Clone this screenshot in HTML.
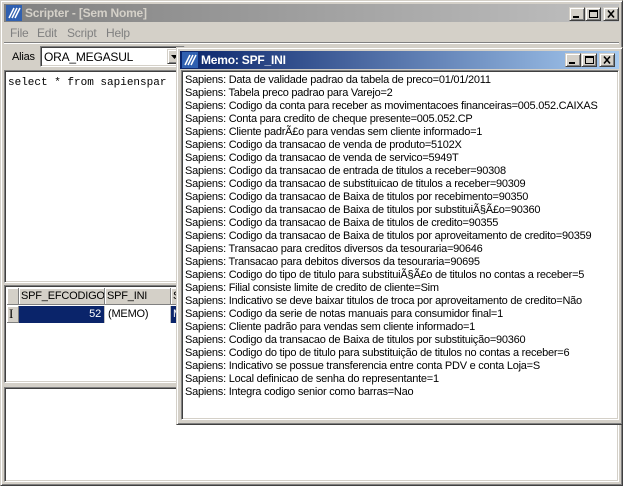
<!DOCTYPE html>
<html><head><meta charset="utf-8"><style>
*{margin:0;padding:0;box-sizing:border-box}
body{width:623px;height:486px;overflow:hidden;background:#d4d0c8;font-family:"Liberation Sans",Arial,sans-serif;font-size:11px;position:relative;letter-spacing:-0.2px}
.abs{position:absolute}
.out{border:1px solid;border-color:#d4d0c8 #404040 #404040 #d4d0c8;box-shadow:inset 1px 1px #fff,inset -1px -1px #808080;background:#d4d0c8}
.sunk{border:1px solid;border-color:#808080 #fff #fff #808080;box-shadow:inset 1px 1px #404040,inset -1px -1px #d4d0c8;background:#fff}
.btn{position:absolute;width:16px;height:14px;top:3px}
.btn svg{position:absolute;left:0;top:0}
.cell{position:absolute;top:0;height:17px;border-right:1px solid #808080;border-bottom:1px solid #808080;background:#d4d0c8;box-shadow:inset 1px 1px #fff;line-height:16px;padding-left:2px;font-size:11px;overflow:hidden;white-space:nowrap}
.memo div{height:13px;line-height:13px;white-space:nowrap;letter-spacing:-0.24px}
</style></head><body>
<div class="abs out" style="left:0;top:0;width:623px;height:486px"></div>
<div class="abs" style="left:4px;top:4px;width:615px;height:18px;background:linear-gradient(90deg,#808080,#c0c0c0)">
 <svg class="abs" style="left:2px;top:1px" width="16" height="16"><rect width="16" height="16" fill="#3060b0"/><path d="M3 13L8 3M6 13L11 3M9 13L14 3" stroke="#fff" stroke-width="1.5"/></svg>
 <div class="abs" style="left:21px;top:2px;color:#d4d0c8;font-weight:bold;font-size:12px">Scripter - [Sem Nome]</div>
 <div class="btn out" style="left:565px"><svg width="14" height="12"><rect x="3" y="8" width="6" height="2" fill="#000"/></svg></div>
 <div class="btn out" style="left:581px"><svg width="14" height="12"><rect x="3.5" y="2.5" width="8" height="7" fill="none" stroke="#000"/><rect x="3" y="2" width="9" height="2" fill="#000"/></svg></div>
 <div class="btn out" style="left:599px"><svg width="14" height="12"><path d="M4 2.5L10 9.5M10 2.5L4 9.5" stroke="#000" stroke-width="1.6"/></svg></div>
</div>
<div class="abs" style="top:26px;left:10px;color:#808080;font-size:12px">File</div>
<div class="abs" style="top:26px;left:37px;color:#808080;font-size:12px">Edit</div>
<div class="abs" style="top:26px;left:67px;color:#808080;font-size:12px">Script</div>
<div class="abs" style="top:26px;left:106px;color:#808080;font-size:12px">Help</div>
<div class="abs" style="left:4px;top:42px;width:615px;height:2px;border-top:1px solid #808080;border-bottom:1px solid #fff"></div>
<div class="abs" style="top:51px;left:12px">Alias</div>
<div class="abs sunk" style="left:40px;top:46px;width:145px;height:21px"><div class="abs" style="left:3px;top:3px;font-size:12px">ORA_MEGASUL</div>
<div class="abs out" style="left:126px;top:2px;width:15px;height:15px"><svg width="13" height="13"><path d="M3 5h7l-3.5 4z" fill="#000"/></svg></div></div>
<div class="abs sunk" style="left:4px;top:70px;width:180px;height:213px"><div class="abs" style="left:3px;top:6px;font-family:'Liberation Mono',monospace;font-size:11px;white-space:nowrap;letter-spacing:0">select * from sapienspar</div></div>
<div class="abs sunk" style="left:4px;top:285px;width:180px;height:98px;overflow:hidden">
 <div class="abs" style="left:2px;top:2px;width:200px;height:18px">
  <div class="cell" style="left:0;width:12px"></div>
  <div class="cell" style="left:12px;width:86px">SPF_EFCODIGO</div>
  <div class="cell" style="left:98px;width:66px">SPF_INI</div>
  <div class="cell" style="left:164px;width:40px">S</div>
 </div>
 <div class="abs" style="left:2px;top:20px;width:200px;height:18px">
  <div class="cell" style="left:0;width:12px;padding-left:2px;font-family:'Liberation Serif',serif;font-size:13px">I</div>
  <div class="abs" style="left:12px;top:0;width:86px;height:17px;background:#0a246a;color:#fff;text-align:right;padding-right:3px;line-height:17px;border-right:1px solid #c0c0c0">52</div>
  <div class="abs" style="left:98px;top:0;width:66px;height:17px;background:#fff;line-height:17px;padding-left:3px;border-right:1px solid #c0c0c0">(MEMO)</div>
  <div class="abs" style="left:164px;top:0;width:40px;height:17px;background:#0a246a;color:#fff;line-height:17px;padding-left:2px">M</div>
 </div>
</div>
<div class="abs sunk" style="left:4px;top:387px;width:615px;height:95px"></div>
<div class="abs out" style="left:176px;top:47px;width:447px;height:378px">
 <div class="abs" style="left:3px;top:3px;width:439px;height:18px;background:linear-gradient(90deg,#0a246a,#a6caf0)">
  <svg class="abs" style="left:2px;top:1px" width="16" height="16"><rect width="16" height="16" fill="#3060b0"/><path d="M3 13L8 3M6 13L11 3M9 13L14 3" stroke="#fff" stroke-width="1.5"/></svg>
  <div class="abs" style="left:21px;top:2px;color:#fff;font-weight:bold;font-size:12px">Memo: SPF_INI</div>
  <div class="btn out" style="left:385px;top:2px"><svg width="14" height="12"><rect x="3" y="8" width="6" height="2" fill="#000"/></svg></div>
  <div class="btn out" style="left:401px;top:2px"><svg width="14" height="12"><rect x="3.5" y="2.5" width="8" height="7" fill="none" stroke="#000"/><rect x="3" y="2" width="9" height="2" fill="#000"/></svg></div>
  <div class="btn out" style="left:419px;top:2px"><svg width="14" height="12"><path d="M4 2.5L10 9.5M10 2.5L4 9.5" stroke="#000" stroke-width="1.6"/></svg></div>
 </div>
 <div class="abs sunk memo" style="left:4px;top:22px;width:438px;height:350px;padding:3px 0 0 3px">
<div>Sapiens: Data de validade padrao da tabela de preco=01/01/2011</div>
<div>Sapiens: Tabela preco padrao para Varejo=2</div>
<div>Sapiens: Codigo da conta para receber as movimentacoes financeiras=005.052.CAIXAS</div>
<div>Sapiens: Conta para credito de cheque presente=005.052.CP</div>
<div>Sapiens: Cliente padrÃ£o para vendas sem cliente informado=1</div>
<div>Sapiens: Codigo da transacao de venda de produto=5102X</div>
<div>Sapiens: Codigo da transacao de venda de servico=5949T</div>
<div>Sapiens: Codigo da transacao de entrada de titulos a receber=90308</div>
<div>Sapiens: Codigo da transacao de substituicao de titulos a receber=90309</div>
<div>Sapiens: Codigo da transacao de Baixa de titulos por recebimento=90350</div>
<div>Sapiens: Codigo da transacao de Baixa de titulos por substituiÃ§Ã£o=90360</div>
<div>Sapiens: Codigo da transacao de Baixa de titulos de credito=90355</div>
<div>Sapiens: Codigo da transacao de Baixa de titulos por aproveitamento de credito=90359</div>
<div>Sapiens: Transacao para creditos diversos da tesouraria=90646</div>
<div>Sapiens: Transacao para debitos diversos da tesouraria=90695</div>
<div>Sapiens: Codigo do tipo de titulo para substituiÃ§Ã£o de titulos no contas a receber=5</div>
<div>Sapiens: Filial consiste limite de credito de cliente=Sim</div>
<div>Sapiens: Indicativo se deve baixar titulos de troca por aproveitamento de credito=Não</div>
<div>Sapiens: Codigo da serie de notas manuais para consumidor final=1</div>
<div>Sapiens: Cliente padrão para vendas sem cliente informado=1</div>
<div>Sapiens: Codigo da transacao de Baixa de titulos por substituição=90360</div>
<div>Sapiens: Codigo do tipo de titulo para substituição de titulos no contas a receber=6</div>
<div>Sapiens: Indicativo se possue transferencia entre conta PDV e conta Loja=S</div>
<div>Sapiens: Local definicao de senha do representante=1</div>
<div>Sapiens: Integra codigo senior como barras=Nao</div>
 </div>
</div>
</body></html>
